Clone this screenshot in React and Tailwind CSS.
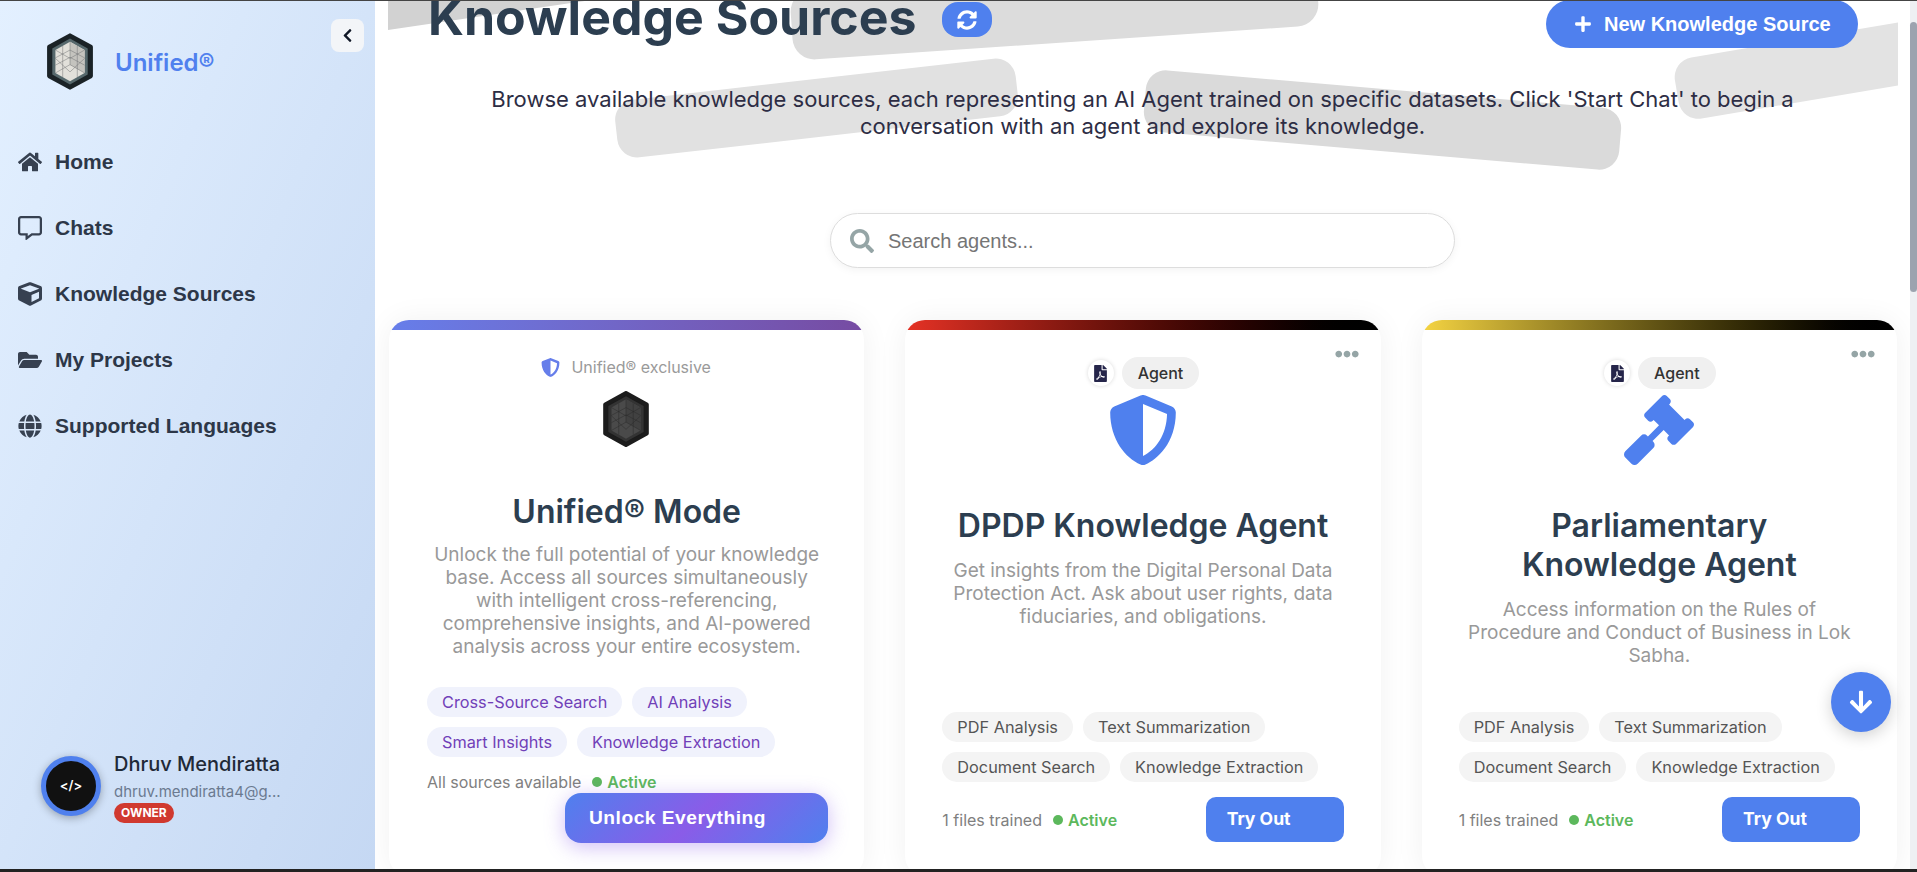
import React from 'react';
import {
  FaHome, FaRegCommentAlt, FaCube, FaFolderOpen, FaGlobe, FaChevronLeft, FaSyncAlt, FaPlus,
  FaSearch, FaFilePdf, FaShieldAlt, FaGavel, FaEllipsisH, FaArrowDown,
} from 'react-icons/fa';

const navItems = [
  { label: 'Home', icon: FaHome },
  { label: 'Chats', icon: FaRegCommentAlt },
  { label: 'Knowledge Sources', icon: FaCube },
  { label: 'My Projects', icon: FaFolderOpen },
  { label: 'Supported Languages', icon: FaGlobe },
];

const agentTags = ['PDF Analysis', 'Text Summarization', 'Document Search', 'Knowledge Extraction'];
const unifiedTags = ['Cross-Source Search', 'AI Analysis', 'Smart Insights', 'Knowledge Extraction'];

const HEX = '24,2 44,13 44,41 24,52 4,41 4,13';

const HexLogo = ({ dark, className }) => (
  <svg viewBox="0 0 48 54" className={className}>
    <polygon points={HEX} fill={dark ? '#1c1c1c' : '#1a2226'} stroke={dark ? '#1c1c1c' : '#1a2226'} strokeWidth="4" strokeLinejoin="round" />
    <polygon points="24,5 41,14.5 41,39.5 24,49 7,39.5 7,14.5" fill={dark ? '#333333' : '#56686c'} />
    <polygon points="24,8 38,16 38,38 24,46 10,38 10,16" fill={dark ? '#4a4a4a' : '#e2e0da'} />
    <polygon points="24,8 38,16 38,38 24,30" fill={dark ? '#414141' : '#c4c3be'} />
    <g stroke={dark ? '#2a2a2a' : '#6a6d6f'} strokeWidth="0.45" fill="none">
      <path d="M24 8V30M24 30L10 38M24 30L38 38M17 12V42M31 12V42M10 23.5L24 16M24 16L38 23.5M10 30.5L24 23M24 23L38 30.5M10 16L24 24M38 16L24 24M10 24L24 37M38 24L24 37" />
    </g>
  </svg>
);

const Tag = ({ children, purple }) => (
  <span className={`inline-flex h-[30px] items-center rounded-full px-[15px] text-[16.3px] ${purple ? 'bg-[#f0f2fc] text-[#7040b8]' : 'bg-[#f4f4f4] text-[#555555]'}`}>
    {children}
  </span>
);

const Status = () => (
  <span className="ml-[11px] flex items-center gap-[5px] font-semibold text-[#5cb85c]">
    <span className="h-[10px] w-[10px] rounded-full bg-[#5cb85c]" />
    Active
  </span>
);

const AgentCard = ({ bar, icon: Icon, title, desc }) => (
  <div className="relative flex h-[556px] flex-col overflow-hidden rounded-[20px] bg-white shadow-[0_0_30px_rgba(0,0,0,0.06)]">
    <div className={`h-[10px] shrink-0 ${bar}`} />
    <FaEllipsisH className="absolute right-[22px] top-[22px] text-[24px] text-[#95a5a6]" />
    <div className="mt-[27px] flex h-[32px] items-center justify-center gap-[8px] pl-[1px]">
      <span className="flex h-[26px] w-[26px] items-center justify-center rounded-full bg-white shadow-[0_0_4px_rgba(0,0,0,0.15)]">
        <FaFilePdf className="text-[17px] text-[#25254a]" />
      </span>
      <span className="flex h-[32px] items-center rounded-full bg-[#f0f0f0] px-[16px] text-[16px] font-medium text-[#333333]">Agent</span>
    </div>
    <div className="mt-[6px] flex h-[70px] justify-center">
      <Icon className="text-[70px] text-[#4f80ee]" />
    </div>
    <h2 className="mt-[41px] px-[48px] text-center text-[32px] font-semibold leading-[39px] text-[#2c3e50]">{title}</h2>
    <p className="mx-auto mt-[14px] w-[400px] text-center text-[19px] leading-[23px] text-[#999999]">{desc}</p>
    <div className="absolute bottom-[94px] left-[37px] right-[37px] flex flex-wrap gap-[10px]">
      {agentTags.map((t) => <Tag key={t}>{t}</Tag>)}
    </div>
    <div className="absolute bottom-[34px] left-[37px] right-[37px] flex h-[45px] items-center text-[16px] text-[#808080]">
      <span>1 files trained</span>
      <Status />
      <button className="ml-auto h-[45px] w-[138px] rounded-[10px] bg-[#4f80ee] pl-[21px] text-left text-[17.6px] font-bold text-white">Try Out</button>
    </div>
  </div>
);

const UnifiedCard = () => (
  <div className="relative flex h-[556px] flex-col overflow-hidden rounded-[20px] bg-white shadow-[0_0_30px_rgba(0,0,0,0.06)]">
    <div className="h-[10px] shrink-0 bg-gradient-to-r from-[#667eea] to-[#764ba2]" />
    <div className="mt-[25px] flex h-[24px] items-center justify-center gap-[11px] pr-[1px] text-[16px] text-[#9a9a9a]">
      <FaShieldAlt className="text-[19px] text-[#667eea]" />
      <span>Unified® exclusive</span>
    </div>
    <div className="mt-[12px] flex justify-center pr-[1px]">
      <HexLogo dark className="h-[56px] w-[50px]" />
    </div>
    <h2 className="mt-[45px] text-center text-[32px] font-semibold leading-[39px] text-[#2c3e50]">Unified® Mode</h2>
    <p className="mx-auto mt-[12px] w-[400px] text-center text-[19px] leading-[23px] text-[#999999]">
      Unlock the full potential of your knowledge base. Access all sources simultaneously with intelligent cross-referencing, comprehensive insights, and AI-powered analysis across your entire ecosystem.
    </p>
    <div className="mx-[38px] mt-[29px] flex flex-wrap gap-[10px]">
      {unifiedTags.map((t) => <Tag key={t} purple>{t}</Tag>)}
    </div>
    <div className="mx-[38px] mt-[13px] flex items-center text-[16px] text-[#808080]">
      <span>All sources available</span>
      <Status />
    </div>
    <button className="absolute left-[176px] top-[473px] h-[50px] w-[263px] rounded-[16px] bg-[linear-gradient(135deg,#4f80ee,#8a5ce8_50%,#4f80ee)] pl-[24px] text-left font-['Liberation_Sans',sans-serif] text-[19.2px] font-bold tracking-[0.5px] text-white shadow-[0_4px_20px_rgba(138,92,232,0.4)]">
      Unlock Everything
    </button>
  </div>
);

const Sidebar = () => (
  <aside className="flex w-[375px] shrink-0 flex-col bg-gradient-to-br from-[#e3f0ff] to-[#c5d8f3]">
    <div className="flex h-[128px] items-start pl-[45px] pt-[31px]">
      <HexLogo className="h-[59px] w-[50px]" />
      <span className="ml-[20px] mt-[15px] text-[24px] font-semibold leading-[32px] text-[#4f80ee]">Unified®</span>
      <button className="ml-auto mr-[11px] mt-[-13px] flex h-[33px] w-[33px] items-center justify-center rounded-[8px] bg-[#f3f5f8] text-[15px] text-[#111827]">
        <FaChevronLeft />
      </button>
    </div>
    <nav className="flex flex-col">
      {navItems.map(({ label, icon: Icon }) => (
        <div key={label} className="flex h-[66px] items-center gap-[13px] pl-[18px] font-['Liberation_Sans',sans-serif] text-[21px] font-bold text-[#2d3748]">
          <Icon className="w-[24px] text-[24px] text-[#374151]" />
          <span>{label}</span>
        </div>
      ))}
    </nav>
    <div className="mt-auto flex items-center gap-[13px] pb-[46px] pl-[41px]">
      <div className="mb-[2px] flex h-[60px] w-[60px] items-center justify-center rounded-full border-[5px] border-[#4f80ee] bg-[#111111] text-[13px] font-semibold text-white shadow-[0_2px_8px_rgba(0,0,0,0.3)]">&lt;/&gt;</div>
      <div className="flex flex-col items-start">
        <span className="text-[20px] font-medium leading-[26px] text-[#1f2937]">Dhruv Mendiratta</span>
        <span className="mt-[5px] text-[15px] leading-[20px] text-[#6b7a90]">dhruv.mendiratta4@g...</span>
        <span className="mt-[1px] flex h-[20px] items-center rounded-full bg-[#d0392f] px-[7px] text-[12px] font-bold text-white">OWNER</span>
      </div>
    </div>
  </aside>
);

const App = () => (
  <div className="flex h-screen flex-col overflow-hidden bg-white font-['Inter',sans-serif]">
    <div className="h-[1px] shrink-0 bg-[#444444]" />
    <div className="flex min-h-0 flex-1">
      <Sidebar />
      <main className="relative min-w-0 flex-1 overflow-hidden">
        {/* grey background blobs behind the header */}
        <div className="absolute bottom-0 left-[13px] right-[12px] top-0 overflow-hidden">
          <div className="absolute left-[-168px] top-[-36px] h-[60px] w-[400px] -rotate-[8.4deg] rounded-[22px] bg-[#d2d2d2]" />
          <div className="absolute left-[403px] top-[-28px] h-[70px] w-[527px] -rotate-[3.9deg] rounded-[22px] bg-[#dcdcdc]" />
          <div className="absolute left-[227px] top-[78px] h-[58px] w-[403px] -rotate-[6.5deg] rounded-[20px] bg-[#e1e1e1]" />
          <div className="absolute left-[756px] top-[88px] h-[62px] w-[477px] rotate-[4.9deg] rounded-[20px] bg-[#dadada]" />
          <div className="absolute left-[1286px] top-[26px] h-[62px] w-[400px] -rotate-[9.6deg] rounded-[20px] bg-[#e3e3e3]" />
        </div>
        <div className="relative">
          <div className="flex h-[48px] items-start pl-[53px] pr-[52px]">
            <h1 className="mt-[-19px] text-[50px] font-bold leading-[70px] text-[#2c3e50]">Knowledge Sources</h1>
            <button className="ml-[25px] mt-[1px] flex h-[35px] w-[50px] items-center justify-center rounded-[16px] bg-[#4f80ee] text-[20px] text-white">
              <FaSyncAlt />
            </button>
            <button className="ml-auto mt-[-1px] flex h-[48px] w-[312px] items-center gap-[12px] rounded-[24px] bg-[#4f80ee] pl-[28px] font-['Liberation_Sans',sans-serif] text-[20px] font-bold text-white">
              <FaPlus className="text-[18px]" />
              New Knowledge Source
            </button>
          </div>
          <p className="mx-auto mt-[37px] w-[1310px] text-center text-[22px] leading-[27px] text-[#2d2d44]">
            Browse available knowledge sources, each representing an AI Agent trained on specific datasets. Click 'Start Chat' to begin a conversation with an agent and explore its knowledge.
          </p>
          <div className="ml-[455px] mt-[73px] flex h-[55px] w-[625px] items-center rounded-full border border-[#dddddd] bg-white pl-[19px] shadow-[0_2px_8px_rgba(0,0,0,0.05)]">
            <FaSearch className="text-[24px] text-[#95a5a6]" />
            <span className="ml-[14px] font-['Liberation_Sans',sans-serif] text-[20px] text-[#757575]">Search agents...</span>
          </div>
          <div className="ml-[14px] mt-[52px] grid w-[1508px] grid-cols-3 gap-[41px]">
            <UnifiedCard />
            <AgentCard
              bar="bg-gradient-to-r from-[#e63225] to-black"
              icon={FaShieldAlt}
              title="DPDP Knowledge Agent"
              desc="Get insights from the Digital Personal Data Protection Act. Ask about user rights, data fiduciaries, and obligations."
            />
            <AgentCard
              bar="bg-gradient-to-r from-[#f5d442] to-black"
              icon={FaGavel}
              title="Parliamentary Knowledge Agent"
              desc="Access information on the Rules of Procedure and Conduct of Business in Lok Sabha."
            />
          </div>
        </div>
        <button className="absolute left-[1456px] top-[671px] flex h-[60px] w-[60px] items-center justify-center rounded-full bg-[#4f80ee] text-[26px] text-white shadow-[0_4px_16px_rgba(0,0,0,0.18)]">
          <FaArrowDown />
        </button>
      </main>
      <div className="w-[7px] shrink-0 bg-[#eef0f3]">
        <div className="mt-[21px] h-[270px] rounded-full bg-[#9ca3af]" />
      </div>
    </div>
    <div className="h-[3px] shrink-0 bg-[#222222]" />
  </div>
);

export default App;
